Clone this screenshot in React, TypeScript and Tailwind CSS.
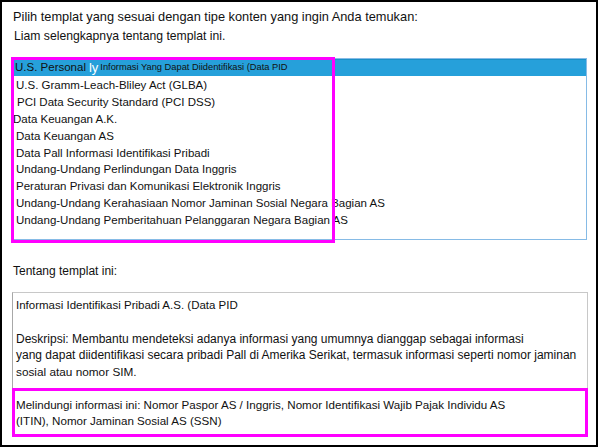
import React from "react";

const items = [
  "U.S. Gramm-Leach-Bliley Act (GLBA)",
  "PCI Data Security Standard (PCI DSS)",
  "Data Keuangan A.K.",
  "Data Keuangan AS",
  "Data Pall Informasi Identifikasi Pribadi",
  "Undang-Undang Perlindungan Data Inggris",
  "Peraturan Privasi dan Komunikasi Elektronik Inggris",
  "Undang-Undang Kerahasiaan Nomor Jaminan Sosial Negara Bagian AS",
  "Undang-Undang Pemberitahuan Pelanggaran Negara Bagian AS",
];

export default function App() {
  return (
    <div className="w-[600px] h-[448px] bg-white">
      <div
        className="relative w-[598px] h-[447px] border-2 border-black box-border text-[#111] flex flex-col"
        style={{ fontFamily: '"Liberation Sans", Arial, sans-serif' }}
      >
        <div className="pl-[11px] pt-[7px] text-[12.8px] leading-[16px]">
          Pilih templat yang sesuai dengan tipe konten yang ingin Anda temukan:
        </div>
        <div className="pl-[12px] mt-[3px] text-[12.2px] leading-[16px]">
          Liam selengkapnya tentang templat ini.
        </div>

        <div className="ml-[10px] mt-[14px] w-[575px] h-[182px] border border-[#86bbe6] box-border text-[11.5px] flex flex-col">
          <div className="h-[17px] shrink-0 bg-[#26a0da] border-t border-[#1b8fc7] flex items-center pl-[2px] whitespace-nowrap">
            <span>U.S. Personal</span>
            <span className="text-white text-[13px] ml-[3px] mr-[2px]">ly</span>
            <span className="text-[9.3px]">Informasi Yang Dapat Diidentifikasi (Data PID</span>
          </div>
          <div className="pt-[1px]">
            {items.map((t, i) => (
              <div
                key={t}
                className={
                  "h-[16.9px] leading-[17px] whitespace-nowrap " +
                  (i === 2 ? "pl-0" : i === 1 ? "pl-[4px]" : "pl-[3px]")
                }
              >
                {t}
              </div>
            ))}
          </div>
        </div>

        <div className="pl-[11px] mt-[23px] text-[12px] leading-[16px]">
          Tentang templat ini:
        </div>

        <div className="ml-[10px] mt-[13px] w-[576px] h-[145px] border border-[#c8c8c8] border-l-[#a8a8a8] box-border pl-[3px] pt-[4px] text-[11.5px] leading-[16.5px]">
          <div>Informasi Identifikasi Pribadi A.S. (Data PID</div>
          <div className="h-[17px]" />
          <div className="text-[12px]">Deskripsi: Membantu mendeteksi adanya informasi yang umumnya dianggap sebagai informasi</div>
          <div className="text-[12px]">yang dapat diidentifikasi secara pribadi Pall di Amerika Serikat, termasuk informasi seperti nomor jaminan</div>
          <div className="text-[11.8px]">sosial atau nomor SIM.</div>
          <div className="h-[16.5px]" />
          <div className="text-[11.6px]">Melindungi informasi ini: Nomor Paspor AS / Inggris, Nomor Identifikasi Wajib Pajak Individu AS</div>
          <div className="text-[11.6px]">(ITIN), Nomor Jaminan Sosial AS (SSN)</div>
        </div>

        <div className="absolute left-[9px] top-[55px] w-[324px] h-[186px] border-[3px] border-[#ff00ff] pointer-events-none" />
        <div className="absolute left-[10px] top-[386px] w-[576px] h-[49px] border-[3px] border-[#ff00ff] pointer-events-none" />
      </div>
    </div>
  );
}
